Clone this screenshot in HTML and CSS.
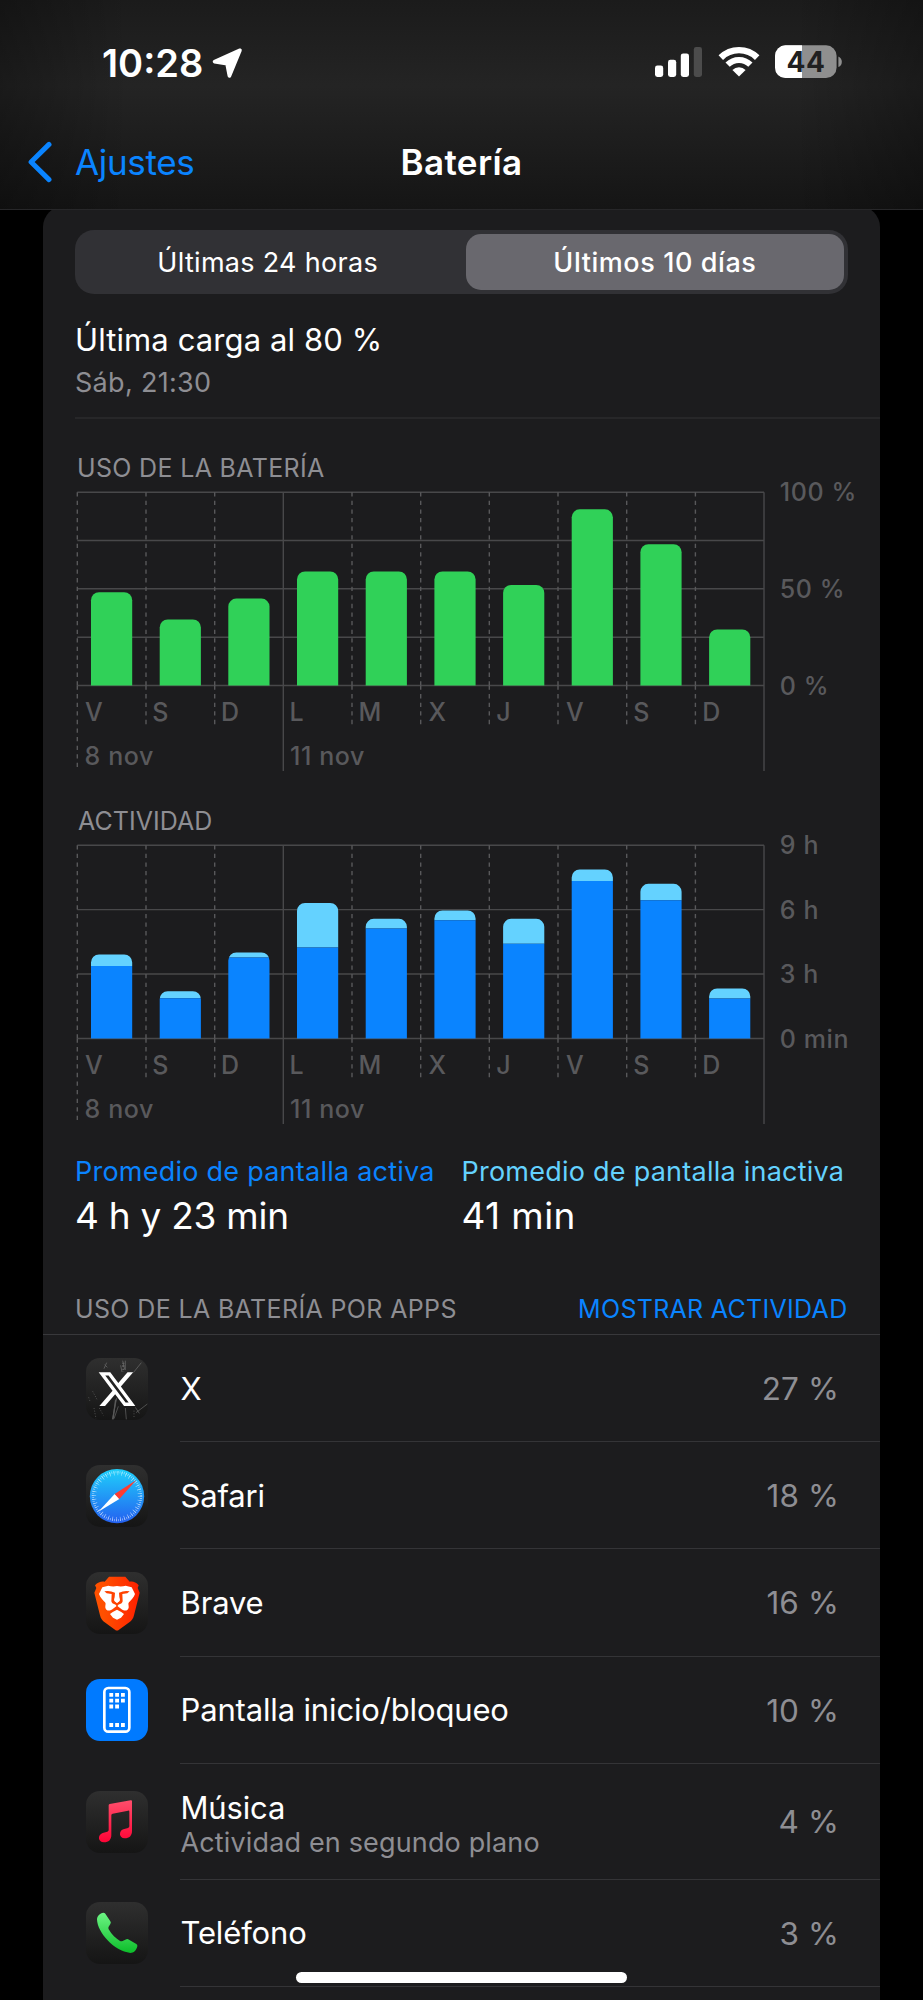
FILE: index.html
```html
<!DOCTYPE html>
<html lang="es">
<head>
<meta charset="utf-8">
<title>Batería</title>
<link rel="stylesheet" href="styles.css">
</head>
<body>
<header class="header">
  <div class="status">
    <span class="clock">10:28</span>
    <svg class="location" width="32" height="32" viewBox="0 0 32 32"><path d="M29 3.2 3.5 14.6 16 16.6 18.4 29Z" fill="#fff" stroke="#fff" stroke-width="3.6" stroke-linejoin="round"/></svg>
    <div class="status-icons">
      <svg width="48" height="34" viewBox="0 0 48 34" fill="#fff"><rect x="0" y="20.5" width="8.2" height="11.5" rx="2.4"/><rect x="13" y="14.8" width="8.2" height="17.2" rx="2.4"/><rect x="25.8" y="8.4" width="8.2" height="23.6" rx="2.4"/><rect x="38.8" y="2" width="8.2" height="30" rx="2.4" fill="#4c4c4c"/></svg>
      <svg width="42" height="34" viewBox="0 0 42 34"><g fill="none" stroke="#fff"><path d="M2.8 12.6A26 26 0 0 1 39.2 12.6" stroke-width="6.4"/><path d="M9.6 19.7A16.2 16.2 0 0 1 32.4 19.7" stroke-width="6"/></g><path d="M21 31.5 14.4 24.9A9.4 9.4 0 0 1 27.6 24.9Z" fill="#fff"/></svg>
      <svg width="68" height="34" viewBox="0 0 68 34"><defs><clipPath id="cell"><rect x="0" y="0.3" width="61.6" height="32.7" rx="10.5"/></clipPath></defs><g clip-path="url(#cell)"><rect width="62" height="34" fill="#8f8f8f"/><rect width="27" height="34" fill="#fff"/></g><path d="M63.4 11.4C68 13.4 68 20 63.4 22Z" fill="#8f8f8f"/><text class="cell-level" x="30.9" y="26.8" text-anchor="middle">44</text></svg>
    </div>
  </div>
  <nav class="nav">
    <a class="back"><svg width="27" height="42" viewBox="0 0 27 42"><path d="M22 3.4 4.1 21 22 38.6" fill="none" stroke="#0a84ff" stroke-width="5" stroke-linecap="round" stroke-linejoin="round"/></svg><span>Ajustes</span></a>
    <h1 class="title">Batería</h1>
  </nav>
</header>

<main class="card">
  <div class="segmented"><span class="segment">Últimas 24 horas</span><span class="segment segment-on">Últimos 10 días</span></div>

  <section class="charge">
    <p class="charge-title">Última carga al 80 %</p>
    <p class="charge-time">Sáb, 21:30</p>
  </section>

  <section class="chart">
    <h2 class="chart-title">USO DE LA BATERÍA</h2>
    <svg class="plot" width="805" height="292" viewBox="75 0 805 292">
      <defs>
        <clipPath id="area"><rect x="75" y="0" width="700" height="202.4"/></clipPath>
        <g id="frame">
          <path class="line" d="M77.3 9.2H764M77.3 202.5H764M283.3 9.2V288M764 9.2V288"/>
          <path class="line dash" d="M77.3 9.2V202.5M146 9.2V202.5M214.7 9.2V202.5M352 9.2V202.5M420.7 9.2V202.5M489.3 9.2V202.5M558 9.2V202.5M626.7 9.2V202.5M695.4 9.2V202.5"/>
          <path class="line dash" d="M77.3 202.5V284.1M146 202.5V241.2M214.7 202.5V241.2M352 202.5V241.2M420.7 202.5V241.2M489.3 202.5V241.2M558 202.5V241.2M626.7 202.5V241.2M695.4 202.5V241.2"/>
          <g class="axis">
            <text x="85" y="238">V</text><text x="152.300" y="238">S</text><text x="221" y="238">D</text><text x="289.500" y="238">L</text><text x="358.500" y="238">M</text><text x="428.6" y="238">X</text><text x="496.300" y="238">J</text><text x="566" y="238">V</text><text x="633.300" y="238">S</text><text x="702.2" y="238">D</text>
            <text x="84.6" y="282">8 nov</text><text x="290" y="282">11 nov</text>
          </g>
        </g>
      </defs>
      <path class="line" d="M77.3 57.5H764M77.3 105.8H764M77.3 154.2H764"/>
      <use href="#frame"/>
      <g clip-path="url(#area)" fill="#30d158">
        <rect x="91" y="109.2" width="41.2" height="110" rx="8"/><rect x="159.7" y="136.5" width="41.2" height="90" rx="8"/><rect x="228.3" y="115.6" width="41.2" height="110" rx="8"/><rect x="297" y="88.4" width="41.2" height="130" rx="8"/><rect x="365.7" y="88.4" width="41.2" height="130" rx="8"/><rect x="434.4" y="88.4" width="41.2" height="130" rx="8"/><rect x="503.1" y="102" width="41.2" height="120" rx="8"/><rect x="571.7" y="26.3" width="41.2" height="200" rx="8"/><rect x="640.4" y="61.2" width="41.2" height="160" rx="8"/><rect x="709.1" y="146.4" width="41.2" height="90" rx="8"/>
      </g>
      <g class="axis"><text x="779.8" y="18">100 %</text><text x="779.8" y="114.8">50 %</text><text x="779.8" y="211.6">0 %</text></g>
    </svg>
  </section>

  <section class="chart chart-activity">
    <h2 class="chart-title title-activity">ACTIVIDAD</h2>
    <svg class="plot" width="805" height="292" viewBox="75 0 805 292">
      <defs>
        <clipPath id="stacks">
          <rect x="91" y="118.5" width="41.2" height="110" rx="8"/><rect x="159.7" y="155.2" width="41.2" height="80" rx="8"/><rect x="228.3" y="116.5" width="41.2" height="110" rx="8"/><rect x="297" y="67" width="41.2" height="160" rx="8"/><rect x="365.7" y="82.8" width="41.2" height="140" rx="8"/><rect x="434.4" y="74.5" width="41.2" height="150" rx="8"/><rect x="503.1" y="82.8" width="41.2" height="140" rx="8"/><rect x="571.7" y="33.5" width="41.2" height="190" rx="8"/><rect x="640.4" y="47.8" width="41.2" height="180" rx="8"/><rect x="709.1" y="152.5" width="41.2" height="80" rx="8"/>
        </clipPath>
      </defs>
      <path class="line" d="M77.3 73.6H764M77.3 138H764"/>
      <use href="#frame"/>
      <g clip-path="url(#stacks)">
        <path fill="#64d2ff" d="M85 110H137V130H85ZM154 150H206V162.3H154ZM222 110H275V121.5H222ZM291 60H344V111.4H291ZM360 75H412V92.6H360ZM429 70H481V84.2H429ZM498 75H550V107.8H498ZM566 30H618V45H566ZM635 40H687V64.2H635ZM704 148H756V162.4H704Z"/>
        <path fill="#0a84ff" d="M85 130H137V202.4H85ZM154 162.3H206V202.4H154ZM222 121.5H275V202.4H222ZM291 111.4H344V202.4H291ZM360 92.6H412V202.4H360ZM429 84.2H481V202.4H429ZM498 107.8H550V202.4H498ZM566 45H618V202.4H566ZM635 64.2H687V202.4H635ZM704 162.4H756V202.4H704Z"/>
      </g>
      <g class="axis"><text x="779.8" y="18.4">9 h</text><text x="779.8" y="83">6 h</text><text x="779.8" y="147.4">3 h</text><text x="779.8" y="211.6">0 min</text></g>
    </svg>
  </section>

  <section class="averages">
    <div><p class="avg-label">Promedio de pantalla activa</p><p class="avg-value">4 h y 23 min</p></div>
    <div><p class="avg-label avg-idle">Promedio de pantalla inactiva</p><p class="avg-value value-idle">41 min</p></div>
  </section>

  <div class="apps-head"><h2 class="apps-title">USO DE LA BATERÍA POR APPS</h2><a class="apps-toggle">MOSTRAR ACTIVIDAD</a></div>

  <ul class="apps">
    <li class="app">
      <svg class="icon" viewBox="0 0 186 186">
        <defs><linearGradient id="tile" x2="0" y2="1"><stop stop-color="#2f2f2f"/><stop offset="1" stop-color="#151515"/></linearGradient></defs>
        <rect width="186" height="186" rx="42" fill="url(#tile)"/>
        <g fill="none" stroke="#9a9a9a" stroke-width="2.5" opacity=".5"><path d="M92 120 79 184M97 145 84 182M110 8 116 34M104 22 108 42M118 8V36M166 14 142 44M184 138 150 164M118 150 121 184M62 14 54 32M148 148 160 166M56 20 64 28"/><path d="M112 14V40" stroke-width="6" stroke-dasharray="4 3 6 5"/><path d="M89 125 81 184" stroke-width="4"/><path d="M24 150 30 182M144 158V180M8 118 12 130M20 100 34 126M40 150 52 172" stroke-dasharray="3 5"/></g>
        <path transform="translate(31.6 31.2) scale(5.1 5.18)" fill="#fff" d="M18.244 2.25h3.308l-7.227 8.26 8.502 11.24H16.17l-5.214-6.817L4.99 21.75H1.68l7.73-8.835L1.254 2.25H8.08l4.713 6.231zm-1.161 17.52h1.833L7.084 4.126H5.117z"/>
      </svg>
      <div class="row"><p class="name">X</p><span class="share">27 %</span></div>
    </li>
    <li class="app">
      <svg class="icon" viewBox="0 0 186 186">
        <defs><linearGradient id="sea" x2="0" y2="1"><stop stop-color="#1fd0fb"/><stop offset="1" stop-color="#2460f0"/></linearGradient></defs>
        <rect width="186" height="186" rx="42" fill="url(#tile)"/>
        <circle cx="93" cy="93.5" r="81.5" fill="url(#sea)"/>
        <g fill="none" stroke="#fff" opacity=".65"><circle cx="93" cy="93.5" r="72" stroke-width="7" stroke-dasharray="1.8 4.483"/><circle cx="93" cy="93.5" r="69" stroke-width="13" stroke-dasharray="1.8 10.243"/></g>
        <path d="M37 140.5 86 87 93 93.5 100 102Z" fill="#fff"/><path d="M151 45 86 87 100 102Z" fill="#ff3b30"/>
      </svg>
      <div class="row"><p class="name">Safari</p><span class="share">18 %</span></div>
    </li>
    <li class="app">
      <svg class="icon" viewBox="0 0 186 186">
        <defs><linearGradient id="mane"><stop offset=".2" stop-color="#ff5000"/><stop offset="1" stop-color="#ff2000"/></linearGradient></defs>
        <rect width="186" height="186" rx="42" fill="url(#tile)"/>
        <path fill="url(#mane)" d="M69 14H118L131 29C140 27 150 30 158 40L155 48 161 62 144 130C142 140 137 146 130 151L99 173Q93 178 87 173L56 151C49 146 44 140 42 130L25 62 31 48 27 40C36 30 46 27 56 29Z"/>
        <path fill="#fff" d="M67 41Q80 45 93 42 106 45 119 41L137 46 147 66C144 76 134 86 129 91 125 95 129 100 128 107 125 119 112 117 105 110L93 101 81 110C74 117 61 119 58 107 57 100 61 95 57 91 52 86 42 76 39 66L49 46Z"/>
        <path fill="#ff4200" d="M55 58Q70 54 87 62L86 75Q83 84 86 88L93 93 100 88Q103 84 100 75L99 62Q116 54 131 58L124 64 109 66 110 88Q108 96 97 98L93 104 89 98Q78 96 76 88L77 66 62 64Z"/>
        <path fill="#fff" d="M93 59 98 62 99 76Q102 84 99 88L93 92 87 88Q84 84 87 76L88 62ZM93 113Q106 119 114 126L105 137 93 143 81 137 72 126Q80 119 93 113Z"/>
      </svg>
      <div class="row"><p class="name">Brave</p><span class="share">16 %</span></div>
    </li>
    <li class="app">
      <svg class="icon" viewBox="0 0 186 186">
        <rect width="186" height="186" rx="42" fill="#007aff"/>
        <rect x="55" y="27" width="75" height="131" rx="12" fill="none" stroke="#fff" stroke-width="8"/>
        <path fill="none" stroke="#fff" stroke-width="11.5" stroke-dasharray="11.5 6" d="M70 47.5H117M70 65H117M70 82.5H100M70 138H117"/>
      </svg>
      <div class="row"><p class="name">Pantalla inicio/bloqueo</p><span class="share">10 %</span></div>
    </li>
    <li class="app app-tall">
      <svg class="icon" viewBox="0 0 186 186">
        <defs><linearGradient id="note" x2="0" y2="1"><stop stop-color="#ff4e6b"/><stop offset="1" stop-color="#ff0436"/></linearGradient></defs>
        <rect width="186" height="186" rx="42" fill="url(#tile)"/>
        <path fill="url(#note)" d="M68 43Q68 40 71 39L134 28Q138 27 138 31V120C138 134 130 142 116 142 98 142 98 120 112 115L126 111Q130 110 130 106V62Q130 58 126 59L80 68Q76 69 76 73V132C76 146 68 154 54 154 35 154 34 131 50 126L64 122Q68 121 68 117Z"/>
      </svg>
      <div class="row"><div class="labels"><p class="name">Música</p><p class="detail">Actividad en segundo plano</p></div><span class="share">4 %</span></div>
    </li>
    <li class="app">
      <svg class="icon" viewBox="0 0 186 186">
        <defs><linearGradient id="call" x2="0" y2="1"><stop stop-color="#6df584"/><stop offset="1" stop-color="#0cbd2a"/></linearGradient></defs>
        <rect width="186" height="186" rx="42" fill="url(#tile)"/>
        <path fill="url(#call)" d="M33 52C33 42 42 34 52 32Q56 32 58 35L73 58Q76 62 73 66L68 74Q66 78 68 82C77 98 90 110 102 117Q106 119 110 117L121 112Q125 110 129 113L151 126Q155 129 154 133C151 146 143 153 133 153 84 147 34 92 33 52Z"/>
      </svg>
      <div class="row"><p class="name">Teléfono</p><span class="share">3 %</span></div>
    </li>
  </ul>
</main>
<div class="home-bar"></div>
</body>
</html>
```
FILE: styles.css
```css
* { box-sizing: border-box; margin: 0; padding: 0; }
html { background: #000; }
body {
  position: relative;
  height: 2000px;
  overflow: hidden;
  background: #000;
  color: #fff;
  font-family: Inter, "Liberation Sans", sans-serif;
}
svg { display: block; flex: none; }
h1, h2 { font-weight: 400; }
ul { list-style: none; }

.header {
  position: relative;
  z-index: 1;
  height: 210px;
  border-bottom: 1px solid #272729;
  background:
    linear-gradient(90deg, rgba(0,0,0,.28), rgba(0,0,0,0) 14%, rgba(0,0,0,0) 86%, rgba(0,0,0,.28)),
    linear-gradient(#1b1b1b, #242424 41%, #151515);
}
.status { display: flex; align-items: center; height: 110px; padding: 14px 80px 0 102px; }
.clock { font-size: 38px; line-height: 48px; font-weight: 600; padding-top: 2px; }
.location { margin: 2px 0 0 8px; }
.status-icons { display: flex; gap: 15px; margin-left: auto; }
.cell-level { font-size: 28px; font-weight: 700; fill: #202020; letter-spacing: .5px; }

.nav { display: grid; grid-template-columns: 1fr auto 1fr; align-items: center; height: 100px; padding: 4px 27px 0; }
.back { display: flex; align-items: center; gap: 21px; color: #0a84ff; font-size: 35px; line-height: 44px; letter-spacing: -.35px; }
.title { font-size: 35px; line-height: 44px; font-weight: 600; letter-spacing: .4px; }

.card {
  height: 1800px;
  margin: -4px 43px 0;
  padding: 23.5px 0 0;
  border-radius: 21px 21px 0 0;
  background: #1c1c1e;
}
.segmented {
  display: grid;
  grid-template-columns: 1fr 1fr;
  gap: 10px;
  height: 64px;
  margin: 0 32.5px 0 32px;
  padding: 4px;
  border-radius: 19px;
  background: #313135;
}
.segment { display: flex; align-items: center; justify-content: center; padding-top: 1px; border-radius: 15px; font-size: 27px; letter-spacing: .3px; }
.segment-on { background: #69686e; font-weight: 500; letter-spacing: .58px; }

.charge { margin: 26px 0 0 32px; padding-bottom: 17px; border-bottom: 2px solid #272729; }
.charge-title { font-size: 31px; line-height: 40px; letter-spacing: .1px; }
.charge-time { margin-top: 6.5px; color: #8e8e93; font-size: 27px; line-height: 34px; letter-spacing: .3px; }

.chart { margin: 34px 0 0 32px; }
.chart-activity { margin-top: 30.5px; }
.chart-title { padding-left: 2px; color: #8e8e93; font-size: 25px; line-height: 30px; letter-spacing: .33px; }
.title-activity { padding-left: 3px; letter-spacing: .05px; }
.plot { overflow: visible; }
.line { fill: none; stroke: #48484a; stroke-width: 1.4; }
.dash { stroke: #58585a; stroke-dasharray: 4.29 4.3; }
.axis { fill: #59595c; font-size: 25px; font-weight: 500; letter-spacing: .6px; }

.averages { display: grid; grid-template-columns: 386.5px 1fr; margin: 27.5px 0 0 32px; }
.avg-label { color: #0a84ff; font-size: 27px; line-height: 34px; letter-spacing: .24px; white-space: nowrap; }
.avg-idle { color: #64d2ff; }
.avg-value { margin-top: 3.5px; font-size: 37px; line-height: 46px; letter-spacing: -.25px; }
.value-idle { letter-spacing: .4px; }

.apps-head {
  display: flex;
  justify-content: space-between;
  margin-top: 55px;
  padding: 0 32.5px 10.5px 32px;
  border-bottom: 1px solid #38383b;
  font-size: 25px;
  line-height: 30px;
}
.apps-title { color: #8e8e93; font-size: 25px; letter-spacing: .36px; }
.apps-toggle { color: #0a84ff; letter-spacing: .3px; }

.app { display: flex; align-items: center; height: 107.2px; padding-left: 43px; }
.app-tall { height: 116px; }
.icon { width: 62px; height: 62px; margin-right: 32px; }
.row { display: flex; flex: 1; align-items: center; justify-content: space-between; height: 100%; padding: 1px 41px 0 0; border-bottom: 1px solid #343437; }
.labels { padding-top: 5px; }
.name { padding-left: .5px; font-size: 31px; line-height: 38px; letter-spacing: -.15px; }
.detail { margin-top: -1px; padding-left: .5px; color: #8e8e93; font-size: 27px; line-height: 34px; letter-spacing: .15px; }
.share { color: #8e8e93; font-size: 31.5px; letter-spacing: .1px; }

.home-bar { position: absolute; left: 296px; top: 1972px; width: 331px; height: 11px; border-radius: 6px; background: #fff; }
```
